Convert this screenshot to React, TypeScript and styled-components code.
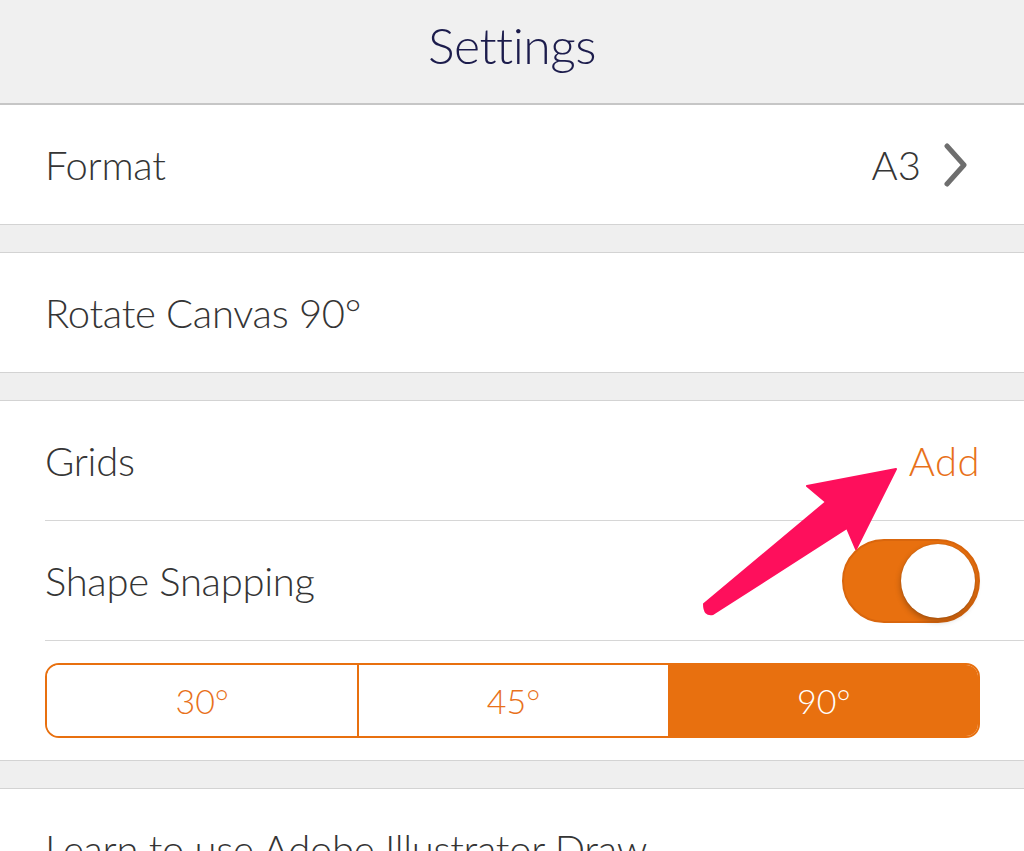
import styled, { createGlobalStyle } from 'styled-components';

const Global = createGlobalStyle`
  html, body {
    margin: 0;
    padding: 0;
    height: 851px;
    overflow: hidden;
    background: #efefef;
  }
  body {
    font-family: Lato, "Open Sans", "Noto Sans", sans-serif;
    font-weight: 300;
  }
`;

const Page = styled.div`
  position: relative;
  width: 1024px;
  height: 851px;
  overflow: hidden;
  background: #efefef;
`;

const Header = styled.header`
  height: 105px;
  box-sizing: border-box;
  padding-bottom: 14px;
  display: flex;
  align-items: center;
  justify-content: center;
  background: #f0f0f0;
  border-bottom: 2px solid #c6c6c6;
`;

const Title = styled.h1`
  margin: 0;
  font-size: 50px;
  font-weight: 300;
  color: #1c1c4c;
  letter-spacing: -0.5px;
`;

const Section = styled.section`
  background: #fff;
  border-bottom: 1px solid #d3d3d3;
`;

const Gap = styled.div`
  height: 27px;
  background: #efefef;
  border-bottom: 1px solid #d3d3d3;
`;

const Row = styled.div`
  padding-left: 45px;
`;

const RowBody = styled.div<{ $divided?: boolean }>`
  height: 119px;
  display: flex;
  align-items: center;
  justify-content: space-between;
  padding-right: 44px;
  border-bottom: ${(p) => (p.$divided ? '1px solid #d6d6d6' : 'none')};
`;

const Label = styled.span`
  font-size: 40px;
  color: #353535;
  letter-spacing: -0.3px;
`;

const Value = styled.span`
  display: flex;
  align-items: center;
  gap: 22px;
  margin-right: 11px;
  font-size: 40px;
  color: #353535;
`;

const AddLink = styled.span`
  font-size: 40px;
  color: #e8711a;
  letter-spacing: 0.5px;
`;

const Switch = styled.div<{ $on: boolean }>`
  width: 138px;
  height: 84px;
  box-sizing: border-box;
  border-radius: 42px;
  border: 2px solid ${(p) => (p.$on ? '#d9660d' : '#d6d6d6')};
  background: ${(p) => (p.$on ? '#e8700f' : '#fff')};
  display: flex;
  align-items: center;
  justify-content: ${(p) => (p.$on ? 'flex-end' : 'flex-start')};
  padding: 0 3px;
`;

const Knob = styled.div`
  width: 74px;
  height: 74px;
  border-radius: 50%;
  background: #fff;
  box-shadow: 0 3px 6px rgba(0, 0, 0, 0.3), 0 0 1px rgba(0, 0, 0, 0.2);
`;

const SegmentWrap = styled.div`
  padding: 22px 44px 22px 0;
`;

const Segmented = styled.div`
  height: 75px;
  box-sizing: border-box;
  display: grid;
  grid-template-columns: 1fr 1fr 1fr;
  border: 2px solid #e8700f;
  border-radius: 14px;
  overflow: hidden;
`;

const Segment = styled.div<{ $active?: boolean }>`
  display: flex;
  align-items: center;
  justify-content: center;
  font-size: 34px;
  color: ${(p) => (p.$active ? '#fff' : '#e8711a')};
  background: ${(p) => (p.$active ? '#e8700f' : '#fff')};
  & + & {
    border-left: 2px solid #e8700f;
  }
`;

const Overlay = styled.svg`
  position: absolute;
  left: 0;
  top: 0;
  pointer-events: none;
`;

const Chevron = () => (
  <svg width="26" height="44" viewBox="0 0 26 44">
    <path d="M4 3 L21 22 L4 41" fill="none" stroke="#6e6e6e" strokeWidth="5" strokeLinecap="round" strokeLinejoin="round" />
  </svg>
);

export default function App() {
  return (
    <Page>
      <Global />
      <Header>
        <Title>Settings</Title>
      </Header>

      <Section>
        <Row>
          <RowBody>
            <Label>Format</Label>
            <Value>
              A3
              <Chevron />
            </Value>
          </RowBody>
        </Row>
      </Section>
      <Gap />

      <Section>
        <Row>
          <RowBody>
            <Label>Rotate Canvas 90°</Label>
          </RowBody>
        </Row>
      </Section>
      <Gap />

      <Section>
        <Row>
          <RowBody $divided>
            <Label>Grids</Label>
            <AddLink>Add</AddLink>
          </RowBody>
        </Row>
        <Row>
          <RowBody $divided>
            <Label>Shape Snapping</Label>
            <Switch $on>
              <Knob />
            </Switch>
          </RowBody>
        </Row>
        <Row>
          <SegmentWrap>
            <Segmented>
              <Segment>30°</Segment>
              <Segment>45°</Segment>
              <Segment $active>90°</Segment>
            </Segmented>
          </SegmentWrap>
        </Row>
      </Section>
      <Gap />

      <Section>
        <Row>
          <RowBody>
            <Label>Learn to use Adobe Illustrator Draw</Label>
          </RowBody>
        </Row>
      </Section>

      <Overlay width="1024" height="851" viewBox="0 0 1024 851">
        <path
          d="M704 604 L826 502 L807 486 L896 469 L856 549 L847 528 L713 614 Q704 616 704 604 Z"
          fill="#fe0f5c"
          stroke="#fe0f5c"
          strokeWidth="2"
          strokeLinejoin="round"
        />
      </Overlay>
    </Page>
  );
}
